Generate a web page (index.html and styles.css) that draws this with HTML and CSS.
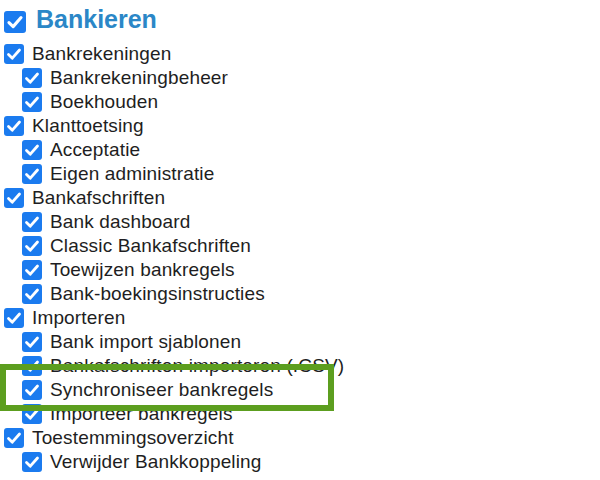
FILE: index.html
```html
<!DOCTYPE html>
<html>
<head>
<meta charset="utf-8">
<link rel="stylesheet" href="styles.css">
</head>
<body>
<div class="tree">
  <div class="head"><span class="cb cb-lg"><svg viewBox="0 0 20 20"><path d="M4.5 10.5 L8.3 14.2 L15.5 6" /></svg></span><span class="title">Bankieren</span></div>
  <div class="row l1"><span class="cb"><svg viewBox="0 0 20 20"><path d="M4.5 10.5 L8.3 14.2 L15.5 6" /></svg></span><span>Bankrekeningen</span></div>
  <div class="row l2"><span class="cb"><svg viewBox="0 0 20 20"><path d="M4.5 10.5 L8.3 14.2 L15.5 6" /></svg></span><span>Bankrekeningbeheer</span></div>
  <div class="row l2"><span class="cb"><svg viewBox="0 0 20 20"><path d="M4.5 10.5 L8.3 14.2 L15.5 6" /></svg></span><span>Boekhouden</span></div>
  <div class="row l1"><span class="cb"><svg viewBox="0 0 20 20"><path d="M4.5 10.5 L8.3 14.2 L15.5 6" /></svg></span><span>Klanttoetsing</span></div>
  <div class="row l2"><span class="cb"><svg viewBox="0 0 20 20"><path d="M4.5 10.5 L8.3 14.2 L15.5 6" /></svg></span><span>Acceptatie</span></div>
  <div class="row l2"><span class="cb"><svg viewBox="0 0 20 20"><path d="M4.5 10.5 L8.3 14.2 L15.5 6" /></svg></span><span>Eigen administratie</span></div>
  <div class="row l1"><span class="cb"><svg viewBox="0 0 20 20"><path d="M4.5 10.5 L8.3 14.2 L15.5 6" /></svg></span><span>Bankafschriften</span></div>
  <div class="row l2"><span class="cb"><svg viewBox="0 0 20 20"><path d="M4.5 10.5 L8.3 14.2 L15.5 6" /></svg></span><span>Bank dashboard</span></div>
  <div class="row l2"><span class="cb"><svg viewBox="0 0 20 20"><path d="M4.5 10.5 L8.3 14.2 L15.5 6" /></svg></span><span>Classic Bankafschriften</span></div>
  <div class="row l2"><span class="cb"><svg viewBox="0 0 20 20"><path d="M4.5 10.5 L8.3 14.2 L15.5 6" /></svg></span><span>Toewijzen bankregels</span></div>
  <div class="row l2"><span class="cb"><svg viewBox="0 0 20 20"><path d="M4.5 10.5 L8.3 14.2 L15.5 6" /></svg></span><span>Bank-boekingsinstructies</span></div>
  <div class="row l1"><span class="cb"><svg viewBox="0 0 20 20"><path d="M4.5 10.5 L8.3 14.2 L15.5 6" /></svg></span><span>Importeren</span></div>
  <div class="row l2"><span class="cb"><svg viewBox="0 0 20 20"><path d="M4.5 10.5 L8.3 14.2 L15.5 6" /></svg></span><span>Bank import sjablonen</span></div>
  <div class="row l2"><span class="cb"><svg viewBox="0 0 20 20"><path d="M4.5 10.5 L8.3 14.2 L15.5 6" /></svg></span><span>Bankafschriften importeren (.CSV)</span></div>
  <div class="row l2"><span class="cb"><svg viewBox="0 0 20 20"><path d="M4.5 10.5 L8.3 14.2 L15.5 6" /></svg></span><span>Synchroniseer bankregels</span></div>
  <div class="row l2"><span class="cb"><svg viewBox="0 0 20 20"><path d="M4.5 10.5 L8.3 14.2 L15.5 6" /></svg></span><span>Importeer bankregels</span></div>
  <div class="row l1"><span class="cb"><svg viewBox="0 0 20 20"><path d="M4.5 10.5 L8.3 14.2 L15.5 6" /></svg></span><span>Toestemmingsoverzicht</span></div>
  <div class="row l2"><span class="cb"><svg viewBox="0 0 20 20"><path d="M4.5 10.5 L8.3 14.2 L15.5 6" /></svg></span><span>Verwijder Bankkoppeling</span></div>
</div>
<div class="highlight"></div>
</body>
</html>
```
FILE: styles.css
```css
html, body {
  margin: 0;
  padding: 0;
  background: #ffffff;
}
body {
  font-family: "Liberation Sans", Arial, sans-serif;
  color: #1e1e22;
  width: 600px;
  height: 480px;
  overflow: hidden;
  position: relative;
}
.tree {
  display: flex;
  flex-direction: column;
}
.head {
  display: flex;
  align-items: center;
  height: 42px;
  padding-left: 4px;
}
.head .cb {
  position: relative;
  top: 1px;
}
.title {
  font-size: 25px;
  font-weight: bold;
  color: #2b87c7;
  margin-left: 10px;
  line-height: 1;
  position: relative;
  top: -2px;
}
.row {
  display: flex;
  align-items: center;
  height: 24px;
  font-size: 19px;
  letter-spacing: 0.15px;
  line-height: 24px;
}
.row .cb {
  margin-right: 8px;
}
.l1 { padding-left: 4px; }
.l2 { padding-left: 22px; }
.cb {
  width: 20px;
  height: 20px;
  background: #1b7bef;
  border-radius: 3px;
  display: inline-flex;
  flex: none;
}
.cb-lg {
  width: 22px;
  height: 22px;
}
.cb svg {
  width: 100%;
  height: 100%;
  fill: none;
  stroke: #ffffff;
  stroke-width: 2.8;
  stroke-linecap: round;
  stroke-linejoin: round;
}
.highlight {
  position: absolute;
  left: 0;
  top: 364px;
  width: 322px;
  height: 35px;
  border: 6px solid #5c9e1f;
}
```
